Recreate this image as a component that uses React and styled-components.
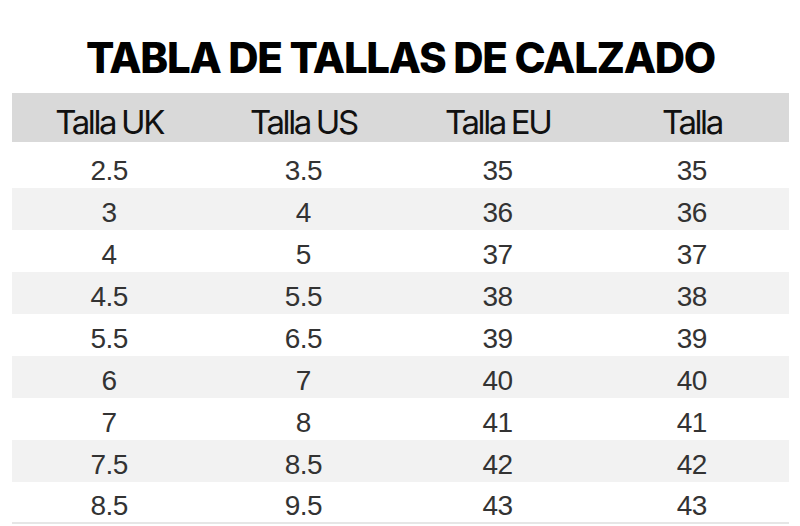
import styled, { createGlobalStyle } from 'styled-components';

const GlobalStyle = createGlobalStyle`
  body {
    margin: 0;
    background: #ffffff;
  }
`;

const Page = styled.div`
  width: 800px;
  height: 526px;
  overflow: hidden;
  padding: 0 11px 0 12px;
  box-sizing: border-box;
`;

const Title = styled.h1`
  margin: 0;
  height: 93px;
  display: flex;
  align-items: center;
  justify-content: center;
  padding-top: 21px;
  box-sizing: border-box;
  font-family: Inter, "Liberation Sans", sans-serif;
  font-weight: 800;
  font-size: 42px;
  letter-spacing: -1.3px;
  color: #000;
`;

const Table = styled.div`
  display: grid;
  grid-template-columns: repeat(4, 1fr);
`;

const HeadCell = styled.div`
  height: 49px;
  background: #d9d9d9;
  display: flex;
  align-items: center;
  justify-content: center;
  padding-top: 8px;
  box-sizing: border-box;
  margin-bottom: 4px;
  font-family: Inter, "Liberation Sans", sans-serif;
  font-size: 33px;
  letter-spacing: -2.4px;
  word-spacing: -1px;
  color: #111;
`;

const Cell = styled.div`
  height: 42px;
  display: flex;
  align-items: center;
  justify-content: center;
  padding-top: 8px;
  box-sizing: border-box;
  background: ${p => (p.striped ? '#f2f2f2' : '#ffffff')};
  font-family: "Liberation Sans", Arial, sans-serif;
  font-size: 28px;
  letter-spacing: -0.5px;
  color: #333;
  border-bottom: ${p => (p.last ? '2px solid #e6e6e6' : 'none')};
`;

const headers = ['Talla UK', 'Talla US', 'Talla EU', 'Talla'];

const rows = [
  ['2.5', '3.5', '35', '35'],
  ['3', '4', '36', '36'],
  ['4', '5', '37', '37'],
  ['4.5', '5.5', '38', '38'],
  ['5.5', '6.5', '39', '39'],
  ['6', '7', '40', '40'],
  ['7', '8', '41', '41'],
  ['7.5', '8.5', '42', '42'],
  ['8.5', '9.5', '43', '43'],
];

export default function App() {
  return (
    <Page>
      <GlobalStyle />
      <Title>TABLA DE TALLAS DE CALZADO</Title>
      <Table>
        {headers.map(h => (
          <HeadCell key={h}>{h}</HeadCell>
        ))}
        {rows.map((row, i) =>
          row.map((v, j) => (
            <Cell
              key={`${i}-${j}`}
              striped={i % 2 === 1}
              last={i === rows.length - 1}
            >
              {v}
            </Cell>
          ))
        )}
      </Table>
    </Page>
  );
}
